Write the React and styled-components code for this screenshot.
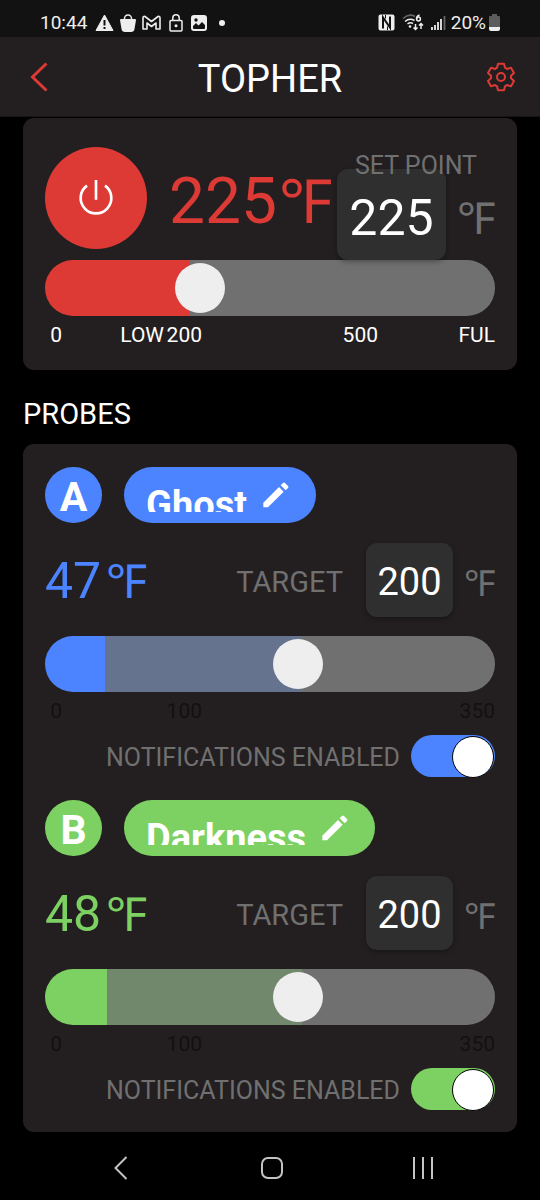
import React, { useState } from 'react'
import styled, { createGlobalStyle } from 'styled-components'

const RED = '#dd3a35'
const BLUE = '#4c84ff'
const GREEN = '#7dd162'
const GREY = '#707070'

export default function App() {
    return (
        <>
            <GlobalStyle />
            <StatusBar />
            <Header>
                <IconButton aria-label="Back">
                    <svg width="18" height="30" viewBox="0 0 18 30" fill="none" stroke={RED} strokeWidth="3">
                        <path d="M16.5 1.5L2.5 15l14 13.5" />
                    </svg>
                </IconButton>
                <Title>TOPHER</Title>
                <IconButton aria-label="Settings">
                    <svg width="30" height="30" viewBox="-45 -45 90 90" fill="none" stroke={RED} strokeWidth="6" strokeLinejoin="round">
                        <path d="M-9-40H9L12-28L18-24L30-28L39-12L30-4V4L39 12L30 28L18 24L12 28L9 40H-9L-12 28L-18 24L-30 28L-39 12L-30 4V-4L-39-12L-30-28L-18-24L-12-28Z" />
                        <circle r="12" />
                    </svg>
                </IconButton>
            </Header>
            <Main>
                <Grill />
                <SectionTitle>PROBES</SectionTitle>
                <ProbeCard>
                    <Probe letter="A" name="Ghost" color={BLUE} fade="#66738f" temp={47} />
                    <Probe letter="B" name="Darkness" color={GREEN} fade="#72886d" temp={48} />
                </ProbeCard>
            </Main>
            <NavBar />
        </>
    )
}

function Grill() {
    const [value, setValue] = useState(225)
    return (
        <GrillCard>
            <GrillRow>
                <PowerButton aria-label="Power">
                    <svg width="36" height="36" viewBox="0 0 108 108" fill="none" stroke="#fff" strokeWidth="8">
                        <path d="M27 17A46 46 0 1 0 81 17M54 0V59" />
                    </svg>
                </PowerButton>
                <GrillTemp>225<Unit $large>℉</Unit></GrillTemp>
                <SetPoint>
                    <SetLabel htmlFor="set-point">SET POINT</SetLabel>
                    <SetRow>
                        <TempInput id="set-point" $large value={value} onChange={e => setValue(Number(e.target.value) || 0)} />
                        <InputUnit $large>℉</InputUnit>
                    </SetRow>
                </SetPoint>
            </GrillRow>
            <Slider
                type="range"
                aria-label="Set point"
                min="0"
                max="700"
                value={value}
                onChange={e => setValue(Number(e.target.value))}
                style={{ '--now': `${value / 7}%`, '--goal': `${value / 7}%` }}
                $color={RED}
                $fade={RED}
            />
            <Scale $cols="17fr 102fr 38fr 176fr 117fr">
                <span>0</span>
                <span>LOW</span>
                <span>200</span>
                <span>500</span>
                <span>FUL</span>
            </Scale>
        </GrillCard>
    )
}

function Probe({ letter, name, color, fade, temp }) {
    const [label, setLabel] = useState(name)
    const [target, setTarget] = useState(200)
    const [notify, setNotify] = useState(true)
    return (
        <ProbeWrapper>
            <ProbeHead>
                <Letter $color={color}>{letter}</Letter>
                <NamePill $color={color}>
                    <NameClip>
                        <NameInput aria-label={`Probe ${letter} name`} value={label} onChange={e => setLabel(e.target.value)} />
                    </NameClip>
                    <svg width="26" height="26" viewBox="0 0 78 78" fill="#fff">
                        <path d="M1 76V62L48 15L62 29L15 76Z" />
                        <path d="M53 10L60 3Q63 0 66 3L75 12Q78 15 75 18L68 25Z" />
                    </svg>
                </NamePill>
            </ProbeHead>
            <TempRow>
                <ProbeTemp $color={color}>{temp}<Unit>℉</Unit></ProbeTemp>
                <TargetLabel htmlFor={`target-${letter}`}>TARGET</TargetLabel>
                <TempInput id={`target-${letter}`} value={target} onChange={e => setTarget(Number(e.target.value) || 0)} />
                <InputUnit>℉</InputUnit>
            </TempRow>
            <Slider
                type="range"
                aria-label={`Probe ${letter} target`}
                min="0"
                max="350"
                value={target}
                onChange={e => setTarget(Number(e.target.value))}
                style={{ '--now': `${temp / 3.5}%`, '--goal': `${target / 3.5}%` }}
                $color={color}
                $fade={fade}
            />
            <Scale $dark $cols="17fr 140fr 293fr">
                <span>0</span>
                <span>100</span>
                <span>350</span>
            </Scale>
            <NotifyRow>
                <NotifyText>NOTIFICATIONS ENABLED</NotifyText>
                <Switch type="checkbox" role="switch" checked={notify} onChange={e => setNotify(e.target.checked)} $color={color} />
            </NotifyRow>
        </ProbeWrapper>
    )
}

function StatusBar() {
    return (
        <Status>
            <StatusGroup $gap="6px">
                <Clock>10:44</Clock>
                <svg width="19" height="18" viewBox="0 0 19 18">
                    <path d="M9.500 1L18 16.500H1Z" fill="#eee" stroke="#eee" strokeLinejoin="round" />
                    <path d="M9.500 6V11.500M9.500 13V15" stroke="#121212" strokeWidth="2" />
                </svg>
                <svg width="16" height="18" viewBox="0 0 16 18">
                    <path d="M4.500 6V4.500a3.500 3.500 0 0 1 7 0V6" fill="none" stroke="#eee" strokeWidth="1.500" />
                    <path d="M1 5H15Q16 5 16 6L14.500 15Q14 18 11 18H5Q2 18 1.500 15L0 6Q0 5 1 5Z" fill="#eee" />
                </svg>
                <svg width="19" height="16" viewBox="0 0 19 16" fill="none" stroke="#eee" strokeWidth="1.600" strokeLinejoin="round">
                    <path d="M1 14V3Q1 1 3 1.500L9.500 6.500L16 1.500Q18 1 18 3V14H14V8L9.500 11.500L5 8V14Z" />
                </svg>
                <Spaced>
                    <svg width="14" height="18" viewBox="0 0 14 18" fill="none" stroke="#eee" strokeWidth="1.500">
                        <rect x="1" y="6.500" width="12" height="10.500" rx="1" />
                        <path d="M3.800 6.500V4a3.200 3.200 0 0 1 6.400 0V6.500" />
                        <circle cx="7" cy="11.700" r="1.500" fill="#eee" stroke="none" />
                    </svg>
                </Spaced>
                <svg width="16" height="16" viewBox="0 0 16 16">
                    <rect width="16" height="16" rx="3" fill="#eee" />
                    <circle cx="5" cy="5" r="1.700" fill="#121212" />
                    <path d="M2 13V11L5 8L7.500 10.500L11 7L14 10V13Q14 14 13 14H3Q2 14 2 13Z" fill="#121212" />
                </svg>
                <Dot />
            </StatusGroup>
            <StatusGroup $gap="5px">
                <svg width="17" height="17" viewBox="0 0 17 17">
                    <rect x="0.500" y="0.500" width="16" height="16" rx="2" fill="#eee" />
                    <path d="M5 14.500V3.500L12 13.500V2.500" fill="none" stroke="#121212" strokeWidth="2" />
                    <path d="M7.500 1V4.500M9.500 16V12.500" stroke="#121212" strokeWidth="1" />
                </svg>
                <Spaced>
                    <svg width="22" height="17" viewBox="0 0 22 17" fill="none" stroke="#eee" strokeWidth="1.500">
                        <path d="M1 4.500Q7-1 13 2.500" stroke="#666" />
                        <path d="M3 7.500Q7.500 3.500 12.500 6.500M5.500 10Q8 8 11 9.500" />
                        <circle cx="8" cy="12.500" r="1.300" fill="#eee" stroke="none" />
                        <path d="M17.500 1Q14.500 2 14.500 5" />
                        <circle cx="16.500" cy="5" r="1.900" />
                        <path d="M13.500 10V15.500M11.500 13.500L13.500 15.500L15.500 13.500M19 15V9.500M17 11.500L19 9.500L21 11.500" />
                    </svg>
                </Spaced>
                <svg width="15" height="15" viewBox="0 0 15 15" stroke="#eee" strokeWidth="1.800">
                    <path d="M1 15V12M4 15V10M7 15V7M10 15V4" />
                    <path d="M13.500 15V1" stroke="#666" />
                </svg>
                <Battery>
                    <span>20%</span>
                    <svg width="11" height="17" viewBox="0 0 11 17">
                        <path d="M3 2V0H8V2H10Q11 2 11 3V13H0V3Q0 2 1 2Z" fill="#5c5c5c" />
                        <path d="M0 13H11V15Q11 17 9 17H2Q0 17 0 15Z" fill="#eee" />
                    </svg>
                </Battery>
            </StatusGroup>
        </Status>
    )
}

function NavBar() {
    return (
        <Nav>
            <NavButton aria-label="System back">
                <svg width="14" height="24" viewBox="0 0 14 24"><path d="M12.500 1L1.500 12L12.500 23" /></svg>
            </NavButton>
            <NavButton aria-label="Home">
                <svg width="24" height="24" viewBox="0 0 24 24"><rect x="2" y="2" width="20" height="20" rx="6" /></svg>
            </NavButton>
            <NavButton aria-label="Recent apps">
                <svg width="22" height="22" viewBox="0 0 22 22"><path d="M2 0V22M11 0V22M20 0V22" /></svg>
            </NavButton>
        </Nav>
    )
}


//styled components

const GlobalStyle = createGlobalStyle`
    * {
        box-sizing: border-box;
    }
    body {
        margin: 0;
        background: #000;
        color: #fff;
        font-family: Roboto, "Liberation Sans", sans-serif;
    }
    button, input {
        font-family: inherit;
        margin: 0;
        padding: 0;
        border: 0;
        color: inherit;
    }
    svg {
        display: block;
        flex: none;
    }
`

const Status = styled.div`
    display: flex;
    justify-content: space-between;
    align-items: center;
    height: 37px;
    padding: 8px 40px 0;
    background: #121212;
    color: #eee;
    font-size: 19px;
    line-height: 28px;
`

const StatusGroup = styled.div`
    display: flex;
    align-items: center;
    gap: ${props => props.$gap};
`

const Clock = styled.span`
    padding-right: 2px;
`

const Spaced = styled.span`
    padding: 0 2px;
`

const Dot = styled.span`
    width: 6px;
    height: 6px;
    margin-left: 6px;
    border-radius: 50%;
    background: #eee;
`

const Battery = styled.span`
    display: flex;
    align-items: center;
    gap: 3px;
`

const Header = styled.header`
    display: flex;
    justify-content: space-between;
    align-items: center;
    height: 80px;
    padding: 0 24px;
    background: #231f20;
    border-bottom: 1px solid #171415;
`

const IconButton = styled.button`
    display: flex;
    justify-content: center;
    width: 30px;
    background: none;
`

const Title = styled.h1`
    margin: 0;
    padding-top: 4px;
    font-size: 38px;
    line-height: 44px;
    font-weight: 400;
`

const Main = styled.main`
    padding: 1px 23px 0;
`

const Card = styled.section`
    border-radius: 11px;
    background: #231f20;
`

const GrillCard = styled(Card)`
    padding: 29px 22px 16px;
`

const ProbeCard = styled(Card)`
    display: flex;
    flex-direction: column;
    gap: 23px;
    padding: 23px 22px 22px;
`

const GrillRow = styled.div`
    display: flex;
    align-items: flex-start;
`

const PowerButton = styled.button`
    display: flex;
    flex: none;
    align-items: center;
    justify-content: center;
    width: 102px;
    height: 102px;
    border-radius: 50%;
    background: ${RED};
`

const GrillTemp = styled.div`
    display: flex;
    align-items: baseline;
    height: 112px;
    margin-left: 22px;
    color: ${RED};
    font-size: 64px;
    line-height: 110px;
`

const Unit = styled.span`
    margin-left: ${props => props.$large ? '2px' : '5px'};
    font-size: ${props => props.$large ? '61px' : '47px'};
`

const SetPoint = styled.div`
    display: flex;
    flex-direction: column;
    width: 158px;
    margin-left: auto;
`

const SetLabel = styled.label`
    z-index: 1;
    color: ${GREY};
    font-size: 25px;
    line-height: 38px;
    text-align: center;
`

const SetRow = styled.div`
    display: flex;
    align-items: center;
    margin-top: -16px;
`

const TempInput = styled.input`
    flex: none;
    width: ${props => props.$large ? '109px' : '87px'};
    height: ${props => props.$large ? '91px' : '74px'};
    padding-top: ${props => props.$large ? '6px' : '3px'};
    border-radius: 11px;
    background: #2f2f2f;
    box-shadow: 0 2px 5px rgba(0, 0, 0, 0.3);
    font-size: ${props => props.$large ? '50px' : '38px'};
    text-align: center;
`

const InputUnit = styled.span`
    width: ${props => props.$large ? '49px' : '42px'};
    padding-top: 8px;
    color: ${GREY};
    font-size: ${props => props.$large ? '44px' : '36px'};
    line-height: 54px;
    text-align: right;
`

const Slider = styled.input`
    display: block;
    appearance: none;
    width: 100%;
    height: 56px;
    border-radius: 28px;
    background: linear-gradient(
        to right,
        ${props => props.$color} var(--now),
        ${props => props.$fade} var(--now) var(--goal),
        ${GREY} var(--goal)
    );

    &::-webkit-slider-thumb {
        appearance: none;
        width: 56px;
        height: 56px;
        border: 3px solid transparent;
        border-radius: 50%;
        background: #eee;
        background-clip: padding-box;
    }
`

const Scale = styled.div`
    display: grid;
    grid-template-columns: ${props => props.$cols};
    color: ${props => props.$dark ? '#121011' : '#fff'};
    font-size: 21px;
    line-height: 38px;
    text-align: right;
`

const SectionTitle = styled.h2`
    margin: 14px 0 0;
    font-size: 29px;
    line-height: 60px;
    font-weight: 400;
`

const ProbeWrapper = styled.div`
    display: flex;
    flex-direction: column;
`

const ProbeHead = styled.div`
    display: flex;
    gap: 22px;
    color: #fff;
    font-weight: 700;
`

const Letter = styled.div`
    width: 57px;
    height: 56px;
    border-radius: 28px;
    background: ${props => props.$color};
    font-size: 41px;
    line-height: 60px;
    text-align: center;
`

const NamePill = styled.div`
    display: flex;
    align-items: center;
    gap: 16px;
    height: 56px;
    padding: 0 27px 0 22px;
    border-radius: 28px;
    background: ${props => props.$color};
`

const NameClip = styled.div`
    align-self: flex-start;
    height: 45px;
    padding-top: 13px;
    overflow: hidden;
`

const NameInput = styled.input`
    display: block;
    field-sizing: content;
    height: 50px;
    background: none;
    font-size: 38px;
    font-weight: 700;
`

const TempRow = styled.div`
    display: flex;
    align-items: center;
    margin: 20px 0 19px;
`

const ProbeTemp = styled.div`
    display: flex;
    align-items: baseline;
    height: 74px;
    padding-top: 3px;
    color: ${props => props.$color};
    font-size: 50px;
    line-height: 70px;
`

const TargetLabel = styled.label`
    margin: 0 23px 0 auto;
    padding-top: 3px;
    color: ${GREY};
    font-size: 29px;
`

const NotifyRow = styled.label`
    display: flex;
    align-items: center;
    justify-content: flex-end;
    gap: 11px;
    margin-top: 5px;
    color: ${GREY};
    font-size: 25px;
`

const NotifyText = styled.span`
    padding-top: 2px;
`

const Switch = styled.input`
    appearance: none;
    display: flex;
    flex: none;
    justify-content: ${props => props.checked ? 'flex-end' : 'flex-start'};
    width: 84px;
    height: 42px;
    padding: 1px;
    border-radius: 21px;
    background: ${props => props.checked ? props.$color : GREY};

    &::before {
        content: '';
        width: 40px;
        height: 40px;
        border: 1px solid #000;
        border-radius: 50%;
        background: #fff;
    }
`

const Nav = styled.nav`
    display: grid;
    grid-template-columns: repeat(3, 1fr);
    height: 68px;
    padding: 4px 42px 0 46px;
`

const NavButton = styled.button`
    display: flex;
    align-items: center;
    justify-content: center;
    background: none;

    svg {
        fill: none;
        stroke: #c4c4c4;
        stroke-width: 2;
    }
`
